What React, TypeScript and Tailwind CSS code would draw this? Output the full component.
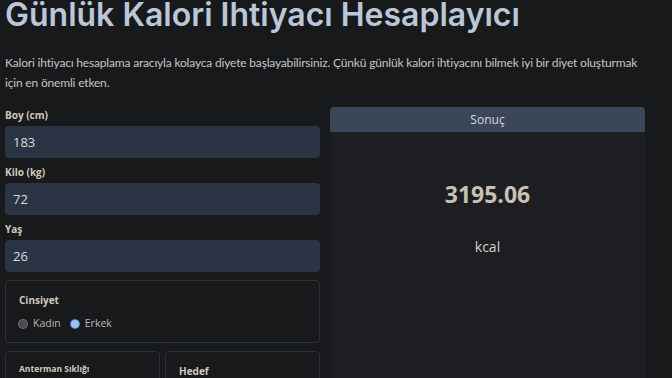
import { useState } from "react";

const labelClass =
  "block h-[14px] text-[10px] leading-[14px] font-bold text-[#cfc9bd] mb-[4px]";
const inputClass =
  "w-full h-[32px] rounded-[4px] bg-[#2b3444] px-[8px] text-[13px] text-[#dcdcdc] outline-none";

function Field({ label, value, first }: { label: string; value: string; first?: boolean }) {
  const [v, setV] = useState(value);
  return (
    <div className={first ? "" : "mt-[7px]"}>
      <label className={labelClass}>{label}</label>
      <input className={inputClass} value={v} onChange={(e) => setV(e.target.value)} />
    </div>
  );
}

function Radio({ checked, label }: { checked?: boolean; label: string }) {
  return (
    <span className="flex items-center gap-[6px]">
      {checked ? (
        <span className="w-[8px] h-[8px] rounded-full bg-[#9ec2ee] ring-1 ring-[#4d7fc4]" />
      ) : (
        <span className="w-[8px] h-[8px] rounded-full bg-[#4a4c50] ring-1 ring-[#6a6c70]" />
      )}
      <span className="text-[10.5px] text-[#b8b8b8]">{label}</span>
    </span>
  );
}

export default function App() {
  return (
    <main
      className="min-h-screen h-[378px] overflow-hidden bg-[#18191b] pl-[5px] text-white"
      style={{ fontFamily: '"Open Sans", "Noto Sans", sans-serif' }}
    >
      <div className="w-[640px]">
        <h1
          className="text-[32px] leading-[30px] font-semibold text-[#b9c7d8] whitespace-nowrap"
          style={{ fontFamily: "Inter, sans-serif" }}
        >
          Günlük Kalori İhtiyacı Hesaplayıcı
        </h1>
        <p
          className="mt-[23px] text-[12px] leading-[20px] tracking-[-0.18px] text-[#c6c6c6]"
          style={{ fontFamily: "Lato, sans-serif" }}
        >
          <span className="whitespace-nowrap">
            Kalori ihtiyacı hesaplama aracıyla kolayca diyete başlayabilirsiniz. Çünkü günlük kalori ihtiyacını bilmek iyi bir diyet oluşturmak
          </span>
          <br />
          için en önemli etken.
        </p>

        <div className="mt-[15px] grid grid-cols-2 gap-[10px] items-start">
          {/* left column: form */}
          <div>
            <Field label="Boy (cm)" value="183" first />
            <Field label="Kilo (kg)" value="72" />
            <Field label="Yaş" value="26" />

            <div className="mt-[8px] h-[63px] rounded-[4px] border border-[#2b313a] px-[13px] pt-[12px]">
              <div className="text-[10px] font-bold text-[#cfc9bd] leading-[14px]">Cinsiyet</div>
              <div className="mt-[9px] flex items-center gap-[10px]">
                <Radio label="Kadın" />
                <Radio label="Erkek" checked />
              </div>
            </div>

            <div className="mt-[8px] grid grid-cols-2 gap-[5px]">
              <div className="h-[80px] rounded-[4px] border border-[#2b313a] px-[13px] pt-[10px]">
                <div className="text-[8.5px] font-bold text-[#cfc9bd] leading-[14px]">Anterman Sıklığı</div>
              </div>
              <div className="h-[80px] rounded-[4px] border border-[#2b313a] px-[13px] pt-[12px]">
                <div className="text-[10px] font-bold text-[#cfc9bd] leading-[14px]">Hedef</div>
              </div>
            </div>
          </div>

          {/* right column: result */}
          <div className="mt-[-1px] h-[300px] rounded-[4px] bg-[#1d1e21] overflow-hidden">
            <div className="h-[25px] flex items-center justify-center bg-[#3b4659] text-[12px] text-[#d5d9df]">
              Sonuç
            </div>
            <div className="flex flex-col items-center">
              <div className="mt-[47px] text-[23px] font-bold text-[#c8c2b3] leading-[30px]">3195.06</div>
              <div className="mt-[28px] text-[14px] text-[#d2d2d2] leading-[20px]">kcal</div>
            </div>
          </div>
        </div>
      </div>
    </main>
  );
}
